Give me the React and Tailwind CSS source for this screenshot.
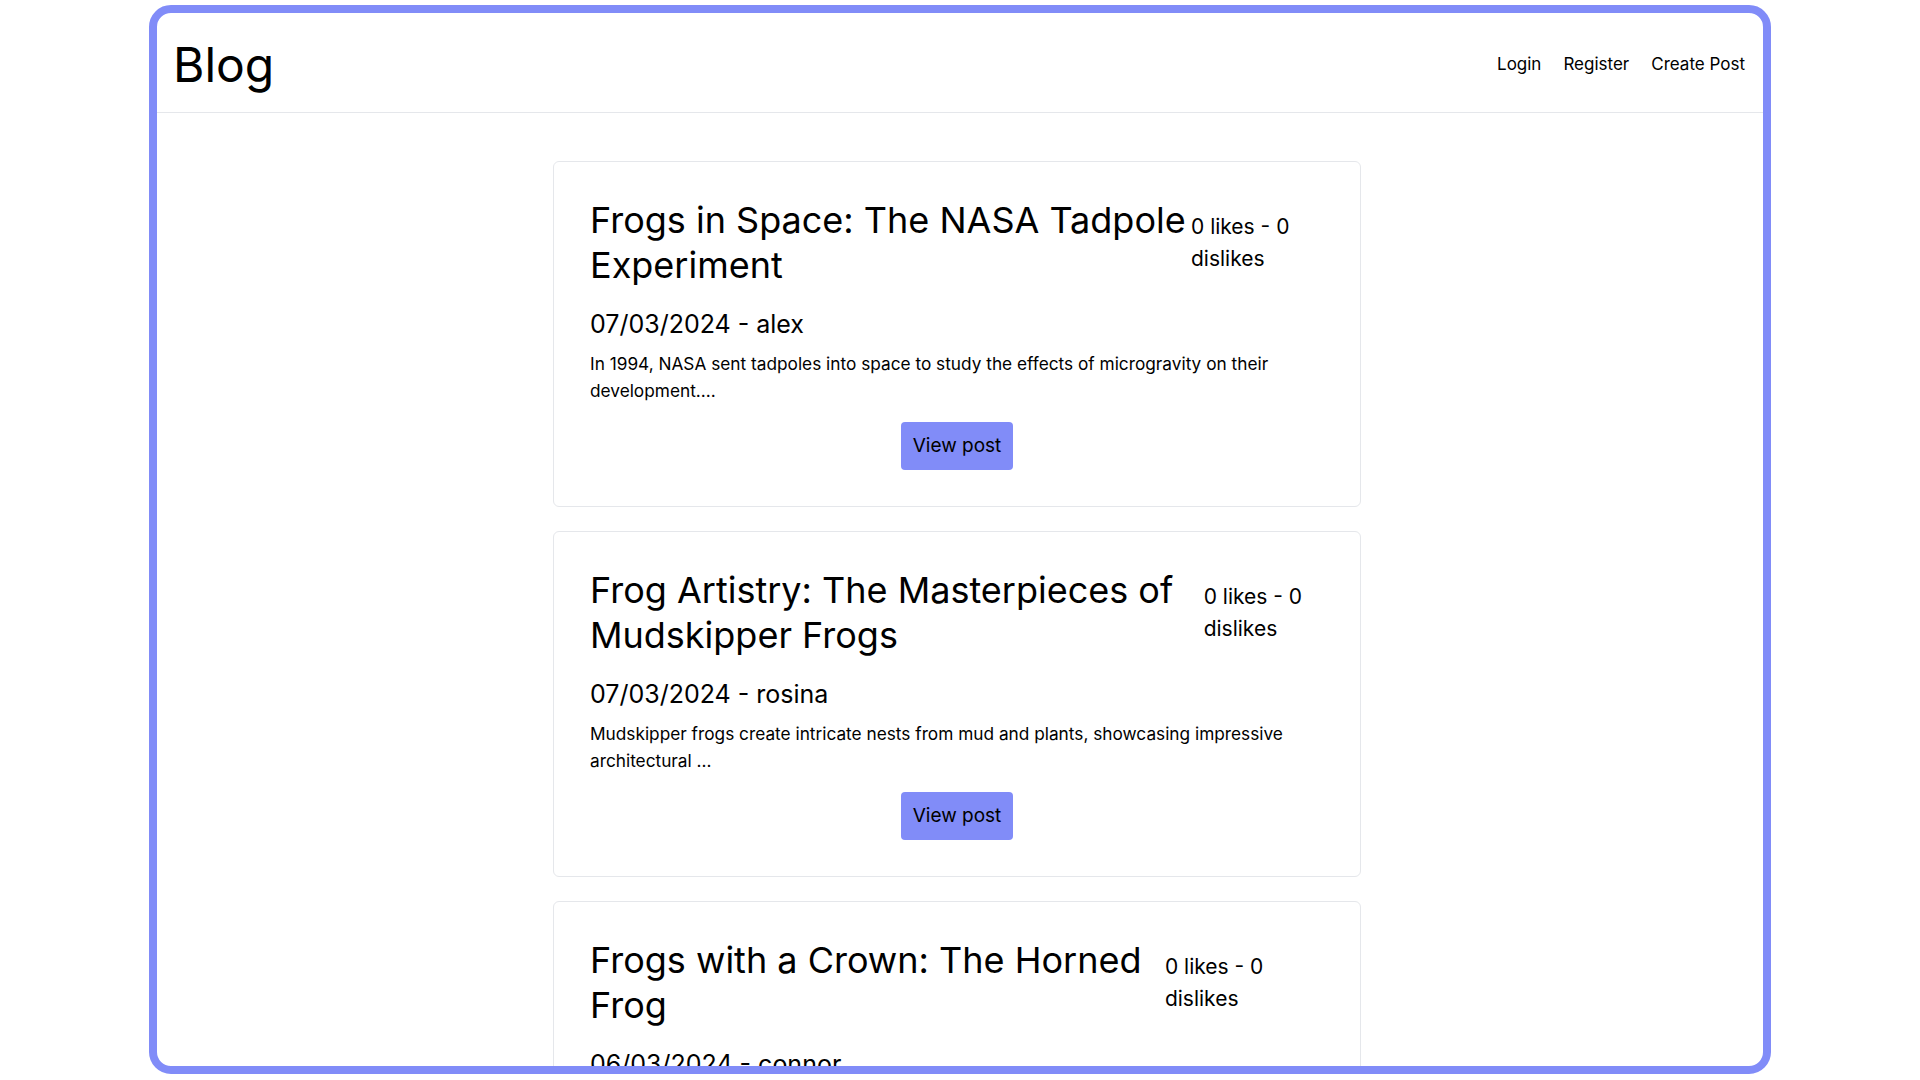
import React from "react";

const posts = [
  {
    title: "Frogs in Space: The NASA Tadpole Experiment",
    date: "07/03/2024",
    author: "alex",
    excerpt:
      "In 1994, NASA sent tadpoles into space to study the effects of microgravity on their development....",
  },
  {
    title: "Frog Artistry: The Masterpieces of Mudskipper Frogs",
    date: "07/03/2024",
    author: "rosina",
    excerpt:
      "Mudskipper frogs create intricate nests from mud and plants, showcasing impressive architectural ...",
  },
  {
    title: "Frogs with a Crown: The Horned Frog",
    date: "06/03/2024",
    author: "connor",
    excerpt:
      "The horned frog is known for the horn-like projections above its eyes, giving it a regal ...",
  },
];

function PostCard({ post }) {
  return (
    <article className="w-[808px] shrink-0 rounded-md border border-[#e5e7eb] bg-white p-9">
      <div className="flex items-center justify-between">
        <h2 className="text-4xl leading-[45px] text-black">{post.title}</h2>
        <p className="pl-[4px] text-[21px] leading-[32px] text-black">0 likes - 0 dislikes</p>
      </div>
      <h3 className="mt-[20px] text-[25px] leading-8 text-black">
        {post.date} - {post.author}
      </h3>
      <p className="mt-[10px] text-[17.25px] leading-[27px] text-black">{post.excerpt}</p>
      <button className="mx-auto mt-[18px] block rounded-sm bg-[#818cf8] px-3 py-2.5 text-[19px] leading-7 text-black">
        View post
      </button>
    </article>
  );
}

export default function App() {
  return (
    <div className="min-h-screen bg-white pt-[5px] font-['Inter','Liberation_Sans',sans-serif]">
      <div className="mx-auto h-[1069px] w-[1622px] overflow-hidden rounded-[22px] border-8 border-[#818cf8] bg-white">
        <header className="flex items-center justify-between border-b border-[#e5e7eb] pl-4 pr-[18px] pt-[22px] pb-[17px]">
          <h1 className="text-5xl leading-[60px] text-black">Blog</h1>
          <nav className="flex items-center gap-[22px] text-[17px] text-black">
            <a href="#">Login</a>
            <a href="#">Register</a>
            <a href="#">Create Post</a>
          </nav>
        </header>
        <main className="mt-12 flex flex-col items-center gap-6 pr-[6px]">
          {posts.map((p) => (
            <PostCard key={p.title} post={p} />
          ))}
        </main>
      </div>
    </div>
  );
}
